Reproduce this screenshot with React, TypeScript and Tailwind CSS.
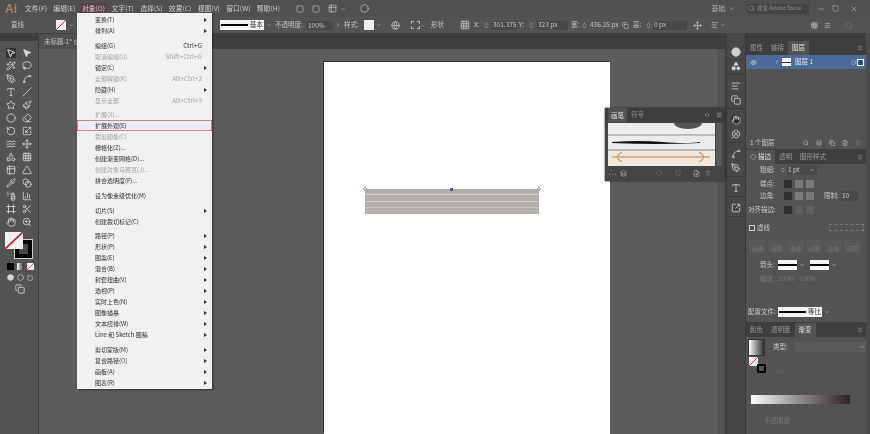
import { ChevronDown, ChevronRight, ChevronUp, ChevronsUpDown, Eye, Search, Minus, Square, X, MousePointer2, Wand2, Lasso, PenTool, Spline, Type, Slash, Star, Paintbrush, Eraser, RotateCcw, Scaling, Waves, Move, Shapes, Grid3x3, Table2, Pipette, Blend, SprayCan, ChartColumn, Frame, Scissors, Hand, ZoomIn, Globe, Menu, Layers, Copy, Trash2, FilePlus, AlignLeft, Clover, SquareArrowOutUpRight, Circle, Triangle } from 'lucide-react'

const font = 'font-["Noto_Sans_CJK_SC","Noto_Sans",sans-serif]'

const menuBar = ['文件(F)', '编辑(E)', '对象(O)', '文字(T)', '选择(S)', '效果(C)', '视图(V)', '窗口(W)', '帮助(H)']

type Item = { t: string; s?: string; off?: boolean; arrow?: boolean; hot?: boolean }

const groups: { gap: string; items: Item[] }[] = [
  { gap: 'mt-0', items: [{ t: '变换(T)', arrow: true }, { t: '排列(A)', arrow: true }] },
  { gap: 'mt-[4px]', items: [
    { t: '编组(G)', s: 'Ctrl+G' },
    { t: '取消编组(U)', s: 'Shift+Ctrl+G', off: true },
    { t: '锁定(L)', arrow: true },
    { t: '全部解锁(K)', s: 'Alt+Ctrl+2', off: true },
    { t: '隐藏(H)', arrow: true },
    { t: '显示全部', s: 'Alt+Ctrl+3', off: true },
  ] },
  { gap: 'mt-[3px]', items: [
    { t: '扩展(X)...', off: true },
    { t: '扩展外观(E)', hot: true },
    { t: '裁剪图像(C)', off: true },
    { t: '栅格化(Z)...' },
    { t: '创建渐变网格(D)...' },
    { t: '创建对象马赛克(J)...', off: true },
    { t: '拼合透明度(F)...' },
  ] },
  { gap: 'mt-[4px]', items: [{ t: '设为像素级优化(M)' }] },
  { gap: 'mt-[4px]', items: [{ t: '切片(S)', arrow: true }, { t: '创建裁切标记(C)' }] },
  { gap: 'mt-[3px]', items: [
    { t: '路径(P)', arrow: true },
    { t: '形状(P)', arrow: true },
    { t: '图案(E)', arrow: true },
    { t: '混合(B)', arrow: true },
    { t: '封套扭曲(V)', arrow: true },
    { t: '透视(P)', arrow: true },
    { t: '实时上色(N)', arrow: true },
    { t: '图像描摹', arrow: true },
    { t: '文本绕排(W)', arrow: true },
    { t: 'Line 和 Sketch 图稿', arrow: true },
  ] },
  { gap: 'mt-[4px]', items: [
    { t: '剪切蒙版(M)', arrow: true },
    { t: '复合路径(O)', arrow: true },
    { t: '画板(A)', arrow: true },
    { t: '图表(R)', arrow: true },
  ] },
]

const tools = [
  [MousePointer2, MousePointer2], [Wand2, Lasso], [PenTool, Spline], [Type, Slash], [Star, Paintbrush], [Circle, Eraser],
  [RotateCcw, Scaling], [Waves, Move], [Shapes, Grid3x3], [Table2, Triangle], [Pipette, Blend], [SprayCan, ChartColumn], [Frame, Scissors], [Hand, ZoomIn],
]

function ObjectMenu() {
  return (
    <div className={`absolute left-[77px] top-[13px] z-20 h-[376px] w-[135px] bg-[#f0f0f0] pt-[1px] shadow-[1px_1px_2px_rgba(0,0,0,0.45)] ${font}`}>
      {groups.map((g, i) => (
        <div key={i} className={g.gap}>
          {g.items.map((it) => (
            <div
              key={it.t}
              className={`flex h-[11px] items-center justify-between pl-[18px] pr-[5px] text-[6px] leading-none ${it.off ? 'text-[#a2a2a2]' : 'text-[#2e2e2e]'} ${it.hot ? 'outline outline-1 -outline-offset-1 outline-[#d27f86] bg-[#e9ebf5]' : ''}`}
            >
              <span>{it.t}</span>
              <span className="flex items-center">
                {it.s && <span className="pr-[5px] text-[6.5px]">{it.s}</span>}
                {it.arrow && <span className="h-0 w-0 border-y-[2px] border-l-[3px] border-y-transparent border-l-[#333]" />}
              </span>
            </div>
          ))}
        </div>
      ))}
    </div>
  )
}

function TopBars() {
  return (
    <>
      <div className="flex h-[17px] items-center whitespace-nowrap bg-[#505050] text-[6.8px] text-[#cfcfcf]">
        <span className="ml-[5px] w-[20px] shrink-0 font-['Liberation_Sans',sans-serif] text-[12px] font-bold text-[#a8845a]">Ai</span>
        <div className="flex shrink-0 gap-[6.4px]">
          {menuBar.map((m, i) => (
            <span key={m} className={i === 2 ? 'bg-[#5b4143] px-[2px] -mx-[2px]' : ''}>{m}</span>
          ))}
        </div>
        <div className="ml-[16px] flex items-center gap-[8px] text-[#bdbdbd]">
          <Square size={8} />
          <Square size={8} />
          <span className="flex items-center"><Table2 size={9} /><ChevronDown size={6} className="ml-[3px]" /></span>
          <Circle size={9} className="ml-[6px]" />
        </div>
        <div className="ml-auto flex shrink-0 items-center text-[#aeaeae]">
          <span>基础</span>
          <ChevronDown size={7} className="ml-[3px]" />
          <div className="ml-[12px] flex h-[10px] w-[62px] items-center gap-[2px] bg-[#454545] px-[1px] text-[5.5px] text-[#8f8f8f]">
            <Search size={7} className="shrink-0" />
            <span>搜索 Adobe Stock</span>
          </div>
          <Minus size={8} className="ml-[8px]" />
          <Square size={7} className="ml-[7px]" />
          <X size={8} className="ml-[11px] mr-[12px]" />
        </div>
      </div>

      <div className="flex h-[16px] items-center whitespace-nowrap bg-[#535353] text-[6.5px] text-[#c4c4c4] [&>*]:shrink-0">
        <span className="ml-[11px] w-[45px]">直线</span>
        <NoneSwatch className="h-[10px] w-[10px]" />
        <ChevronDown size={6} className="ml-[2px]" />
        <div className="ml-[146px] flex h-[10px] w-[44px] items-center bg-[#f4f4f4] pl-[1px] text-[#333]">
          <span className="h-[2px] w-[27px] bg-black" />
          <span className="ml-[2px]">基本</span>
        </div>
        <ChevronDown size={6} className="ml-[2px]" />
        <span className="ml-[3px] w-[31px]">不透明度:</span>
        <span className="h-[9px] w-[27px] bg-[#484848] pl-[2px] leading-[9px]">100%</span>
        <ChevronRight size={6} className="ml-[2px]" />
        <span className="ml-[3px] w-[20px]">样式:</span>
        <span className="h-[10px] w-[10px] bg-[#eeeeee]" />
        <ChevronDown size={6} className="ml-[2px]" />
        <Globe size={9} className="ml-[9px]" />
        <span className="ml-[11px] h-[8px] w-[9px] border border-dashed border-[#b5b5b5]" />
        <ChevronDown size={5} />
        <span className="ml-[6px] w-[14px]">形状</span>
        <Grid3x3 size={10} className="ml-[15px]" />
        <span className="ml-[4px] w-[5px]">X:</span>
        <ChevronsUpDown size={7} className="ml-[4px]" />
        <span className="ml-[2px] flex h-[9px] w-[25px] items-center bg-[#484848] pl-[1px]">301.375</span>
        <span className="ml-[2px] w-[5px]">Y:</span>
        <ChevronsUpDown size={7} className="ml-[4px]" />
        <span className="ml-[2px] flex h-[9px] w-[31px] items-center bg-[#484848] pl-[1px]">323 px</span>
        <span className="ml-[3px] w-[7px]">宽:</span>
        <ChevronsUpDown size={7} className="ml-[3px]" />
        <span className="ml-[1px] flex h-[9px] w-[29px] items-center pl-[1px]">436.25 px</span>
        <Copy size={7} className="ml-[4px]" />
        <span className="ml-[4px] w-[7px]">高:</span>
        <ChevronsUpDown size={7} className="ml-[5px]" />
        <span className="ml-[1px] flex h-[9px] w-[34px] items-center bg-[#484848] pl-[1px]">0 px</span>
        <Move size={9} className="ml-[6px]" />
        <AlignLeft size={8} className="ml-[9px]" />
        <ChevronDown size={6} className="ml-[1px]" />
        <Grid3x3 size={7} className="ml-[85px]" />
        <Menu size={7} className="ml-[6px]" />
        <Square size={7} className="ml-[14px] text-[#777]" />
      </div>
    </>
  )
}

function NoneSwatch({ className }: { className: string }) {
  return (
    <svg viewBox="0 0 10 10" preserveAspectRatio="none" className={className}>
      <rect width="10" height="10" fill="#f5f0f0" />
      <line x1="0" y1="10" x2="10" y2="0" stroke="#b0283a" strokeWidth="1" />
    </svg>
  )
}

function Toolbar() {
  return (
    <aside className="flex w-[39px] shrink-0 flex-col border-r border-[#3f3f3f] bg-[#535353] text-[#d6d6d6]">
      <div className="h-[8px] bg-[#3f3f3f]" />
      <div className="mt-[6px] grid grid-cols-2 justify-items-center gap-y-[2px] px-[3px]">
        {tools.map(([A, B], i) => (
          <div key={i} className="contents">
            <A size={10} className={`my-[0.5px] ${i === 0 ? 'bg-[#333] text-white' : ''}`} />
            <B size={10} className="my-[0.5px]" fill={i === 0 ? 'currentColor' : 'none'} />
          </div>
        ))}
      </div>
      <div className="relative ml-[5px] mt-[5px] h-[27px] w-[28px]">
        <div className="absolute left-[10px] top-[8px] h-[18px] w-[17px] border-[4px] border-black bg-[#4a4a4a] outline outline-1 outline-[#ccc]" />
        <NoneSwatch className="absolute left-0 top-0 h-[17px] w-[18px]" />
      </div>
      <div className="ml-[7px] mt-[4px] flex items-center gap-[3px]">
        <span className="h-[7px] w-[7px] bg-black" />
        <span className="h-[7px] w-[7px] bg-gradient-to-r from-white to-[#333]" />
        <NoneSwatch className="h-[7px] w-[7px]" />
      </div>
      <div className="ml-[7px] mt-[4px] flex items-center gap-[3px]">
        <Circle size={7} fill="currentColor" />
        <Circle size={7} />
        <Square size={6} />
      </div>
      <Copy size={10} className="ml-[15px] mt-[3px]" />
    </aside>
  )
}

function FloatingBrushes() {
  return (
    <div className="absolute left-[566px] top-[59px] z-10 h-[73px] w-[120px] bg-[#454545] shadow-[0_0_2px_#222] text-[6.5px] text-[#c8c8c8]">
      <div className="flex h-[14px] items-center bg-[#3e3e3e]">
        <span className="ml-[3px] bg-[#535353] px-[3px] leading-[14px] text-[#e0e0e0]">画笔</span>
        <span className="ml-[4px] text-[#8f8f8f]">符号</span>
        <ChevronsUpDown size={6} className="ml-auto rotate-90" />
        <Menu size={6} className="ml-[6px] mr-[3px]" />
      </div>
      <div className="ml-[3px] mt-[1px] flex h-[43px]">
        <div className="h-full w-[107px] overflow-hidden bg-[#ececec]">
          <svg viewBox="0 0 107 43" className="block h-[43px] w-[107px]">
            <ellipse cx="80" cy="0" rx="14" ry="6" fill="#555" />
            <line x1="0" y1="12" x2="107" y2="12" stroke="#8a8a8a" />
            <path d="M4 19 Q30 17 55 19 T92 19 L92 20 Q50 22 4 20Z" fill="#111" />
            <line x1="0" y1="27" x2="107" y2="27" stroke="#8a8a8a" />
            <rect x="0" y="28" width="107" height="15" fill="#f0e7dc" />
            <line x1="4" y1="34" x2="102" y2="34" stroke="#d9b596" strokeWidth="2" />
            <path d="M14 29 Q5 34 14 39 M91 29 Q100 34 91 39" fill="none" stroke="#d29a6b" strokeWidth="1.2" />
          </svg>
        </div>
        <div className="ml-[1px] w-[6px] bg-[#5a5a5a]" />
      </div>
      <div className="mx-[3px] flex h-[14px] items-center text-[#bbb]">
        <span>&#x2234;.</span>
        <Layers size={7} className="ml-[4px]" />
        <Circle size={6} className="ml-[29px] text-[#777]" />
        <Square size={6} className="ml-[13px] text-[#777]" />
        <FilePlus size={7} className="ml-[12px]" />
        <Trash2 size={6} className="ml-[5px] text-[#777]" />
      </div>
    </div>
  )
}

function Canvas() {
  return (
    <main className="relative flex-1 bg-[#5c5c5c]">
      {/* artboard */}
      <div className="absolute left-[285px] top-[13px] h-[372px] w-[286px] bg-white shadow-[-1px_-1px_0_#333]" />
      {/* selected shape */}
      <div className="absolute left-[326px] top-[140px] flex h-[25px] w-[174px] flex-col justify-between bg-[#b2afab] pt-[5px] pb-[6px]">
        <span className="h-px bg-[#d4cfc7]" />
        <span className="h-px bg-[#d4cfc7]" />
        <span className="h-px bg-[#c6c2bb]" />
      </div>
      <span className="absolute left-[324px] top-[138px] h-[4px] w-[4px] rounded-full border border-[#7f8fb0] bg-white" />
      <span className="absolute left-[498px] top-[138px] h-[4px] w-[4px] rounded-full border border-[#7f8fb0] bg-white" />
      <span className="absolute left-[411px] top-[139px] h-[3px] w-[3px] bg-[#3f5f8f]" />
      <div className="absolute bottom-0 right-0 top-0 flex w-[7px] justify-center bg-[#535353] text-[#777]">
        <ChevronUp size={6} className="mt-[2px]" />
      </div>
      <FloatingBrushes />
    </main>
  )
}

function Dock() {
  const icons = [[Circle, Shapes], [AlignLeft, Copy], [Hand, Clover], [Spline, PenTool], [Type], [SquareArrowOutUpRight]]
  return (
    <div className="flex w-[18px] shrink-0 flex-col items-center bg-[#484848] pt-[11px] text-[#cfcfcf]">
      {icons.map((g, i) => (
        <div key={i} className="mb-[3px] flex w-full flex-col items-center gap-[4px] border-b border-[#3c3c3c] py-[3px]">
          {g.map((I, j) => (
            <I key={j} size={10} fill={i === 0 ? 'currentColor' : 'none'} className={i === 2 && j === 0 ? 'rounded-full bg-[#2f2f2f]' : ''} />
          ))}
        </div>
      ))}
    </div>
  )
}

function Tabs({ labels, active }: { labels: string[]; active: number }) {
  return (
    <div className="flex h-[15px] items-end bg-[#3f3f3f] text-[6.5px] text-[#9a9a9a]">
      {labels.map((l, i) => (
        <span key={l} className={`flex h-[14px] items-center px-[4px] ${i === active ? 'bg-[#535353] text-[#e2e2e2]' : ''}`}>{l}</span>
      ))}
      <Menu size={6} className="ml-auto mb-[4px] mr-[3px]" />
    </div>
  )
}

function Field({ w, children }: { w: string; children?: React.ReactNode }) {
  return <span className={`flex h-[10px] items-center bg-[#4a4a4a] px-[1px] ${w}`}>{children}</span>
}

function Arrowhead() {
  return (
    <span className="flex items-center">
      <span className="flex h-[10px] w-[19px] items-center bg-[#f4f4f4]"><span className="h-[2px] w-full bg-black" /></span>
      <ChevronDown size={6} className="ml-[2px]" />
    </span>
  )
}

function RightPanels() {
  return (
    <div className="flex w-[120px] shrink-0 flex-col bg-[#535353] text-[6.5px] text-[#c8c8c8]">
      <div className="h-[7px] bg-[#3f3f3f]" />
      <Tabs labels={['属性', '链接', '图层']} active={2} />
      <div className="flex h-[14px] items-center bg-[#4d6a98] pl-[4px] text-[#e4e8f0]">
        <Eye size={7} />
        <span className="ml-[17px]"><ChevronRight size={6} /></span>
        <span className="ml-[2px] flex h-[8px] w-[9px] items-center bg-white"><span className="h-[1px] w-full bg-[#333]" /></span>
        <span className="ml-[4px]">图层 1</span>
        <Circle size={5} className="ml-auto" />
        <span className="ml-[2px] mr-[3px] h-[5px] w-[5px] bg-[#2b4d92] outline outline-1 outline-white" />
      </div>
      <div className="h-[68px]" />
      <div className="flex h-[12px] items-center pl-[4px]">
        <span>1 个图层</span>
        <Search size={6} className="ml-[28px]" />
        <Layers size={6} className="ml-[7px]" />
        <Copy size={6} className="ml-[7px]" />
        <FilePlus size={6} className="ml-[7px]" />
        <Trash2 size={6} className="ml-[7px] text-[#6f6f6f]" />
      </div>

      <Tabs labels={['◇ 描边', '透明', '图形样式']} active={0} />
      <div className="flex h-[12px] items-center pl-[14px]">
        <span className="w-[15px]">粗细:</span>
        <ChevronsUpDown size={6} className="ml-[5px]" />
        <Field w="w-[30px] ml-[1px]">1 pt</Field>
        <ChevronDown size={6} className="-ml-[8px]" />
      </div>
      <div className="mt-[2px] flex h-[12px] items-center pl-[14px]">
        <span className="w-[24px]">端点:</span>
        <span className="h-[8px] w-[8px] bg-[#2f2f2f]" />
        <span className="ml-[3px] h-[8px] w-[8px] bg-[#7a7a7a]" />
        <span className="ml-[3px] h-[8px] w-[8px] bg-[#7a7a7a]" />
      </div>
      <div className="flex h-[12px] items-center pl-[14px]">
        <span className="w-[24px]">边角:</span>
        <span className="h-[8px] w-[8px] bg-[#2f2f2f]" />
        <span className="ml-[3px] h-[8px] w-[8px] bg-[#7a7a7a]" />
        <span className="ml-[3px] h-[8px] w-[8px] bg-[#7a7a7a]" />
        <span className="ml-[10px] w-[15px]">限制:</span>
        <Field w="w-[17px] ml-[2px]">10</Field>
      </div>
      <div className="mt-[1px] flex h-[14px] items-center pl-[2px]">
        <span className="w-[36px]">对齐描边:</span>
        <span className="h-[8px] w-[8px] bg-[#2f2f2f]" />
        <span className="ml-[3px] h-[8px] w-[8px] bg-[#5f5f5f]" />
        <span className="ml-[3px] h-[8px] w-[8px] bg-[#5f5f5f]" />
      </div>
      <div className="mt-[5px] flex h-[11px] items-center pl-[3px]">
        <span className="h-[6px] w-[6px] border border-[#ccc]" />
        <span className="ml-[2px]">虚线</span>
        <span className="ml-auto mr-[2px] h-[7px] w-[35px] border border-dashed border-[#777]" />
      </div>
      <div className="mt-[7px] flex gap-[2px] px-[3px] text-[#777]">
        {['虚线', '间隙', '虚线', '间隙', '虚线', '间隙'].map((l, i) => (
          <span key={i} className="flex h-[13px] w-[17px] items-end justify-center bg-[#585858] text-[5.5px]">{l}</span>
        ))}
      </div>
      <div className="mt-[5px] flex h-[14px] items-center pl-[14px]">
        <span className="w-[18px]">箭头:</span>
        <Arrowhead />
        <span className="ml-[5px]" />
        <Arrowhead />
      </div>
      <div className="mt-[2px] flex h-[10px] gap-[5px] pl-[14px] text-[#777]">
        <span>缩放</span><span>100%</span><span>100%</span>
      </div>
      <div className="mt-[20px] flex h-[16px] items-center pl-[2px]">
        <span className="w-[30px]">配置文件:</span>
        <span className="flex h-[10px] w-[44px] items-center bg-[#f4f4f4] pl-[1px] text-[#333]">
          <span className="h-[2px] w-[27px] bg-black" />
          <span className="ml-[2px]">等比</span>
        </span>
        <ChevronDown size={6} className="ml-[2px]" />
      </div>
      <div className="h-[2px]" />
      <Tabs labels={['颜色', '透明度', '渐变']} active={2} />
      <div className="mt-[2px] flex h-[16px] items-center pl-[3px]">
        <span className="h-[15px] w-[15px] bg-gradient-to-r from-white to-[#333] outline outline-1 outline-[#333]" />
        <span className="ml-[9px]">类型:</span>
        <span className="ml-[6px] flex h-[10px] flex-1 items-center justify-end bg-[#5a5a5a]">
          <ChevronDown size={6} className="mr-[1px]" />
        </span>
      </div>
      <div className="relative mt-[2px] h-[18px] pl-[3px] text-[#7a7a7a]">
        <NoneSwatch className="h-[9px] w-[9px]" />
        <span className="absolute left-[11px] top-[7px] h-[9px] w-[9px] border-[2px] border-black" />
        <span className="absolute left-[30px] top-[8px]">△</span>
      </div>
      <div className="h-[20px]" />
      <div className="mx-[5px] h-[9px] w-[99px] bg-gradient-to-r from-white via-[#8f8a8a] to-[#2c2626]" />
      <div className="mt-[12px] pl-[18px] text-[#777]">不透明度</div>
    </div>
  )
}

export default function App() {
  return (
    <div className={`relative flex h-[434px] w-[870px] flex-col overflow-hidden bg-[#535353] blur-[0.35px] ${font}`}>
      <TopBars />
      <div className="flex flex-1">
        <Toolbar />
        <div className="flex flex-1 flex-col">
          <div className="flex h-[16px] items-end bg-[#3f3f3f] text-[6.5px] text-[#c4c4c4]">
            <span className="flex h-[15px] items-center bg-[#505050] pl-[5px] pr-[20px]">未标题-1* @</span>
          </div>
          <Canvas />
        </div>
        <div className="w-[2px] shrink-0 bg-[#3f3f3f]" />
        <Dock />
        <div className="w-[1px] shrink-0 bg-[#3a3a3a]" />
        <RightPanels />
        <div className="w-[4px] shrink-0 bg-[#4b4b4b]" />
      </div>
      <ObjectMenu />
    </div>
  )
}
